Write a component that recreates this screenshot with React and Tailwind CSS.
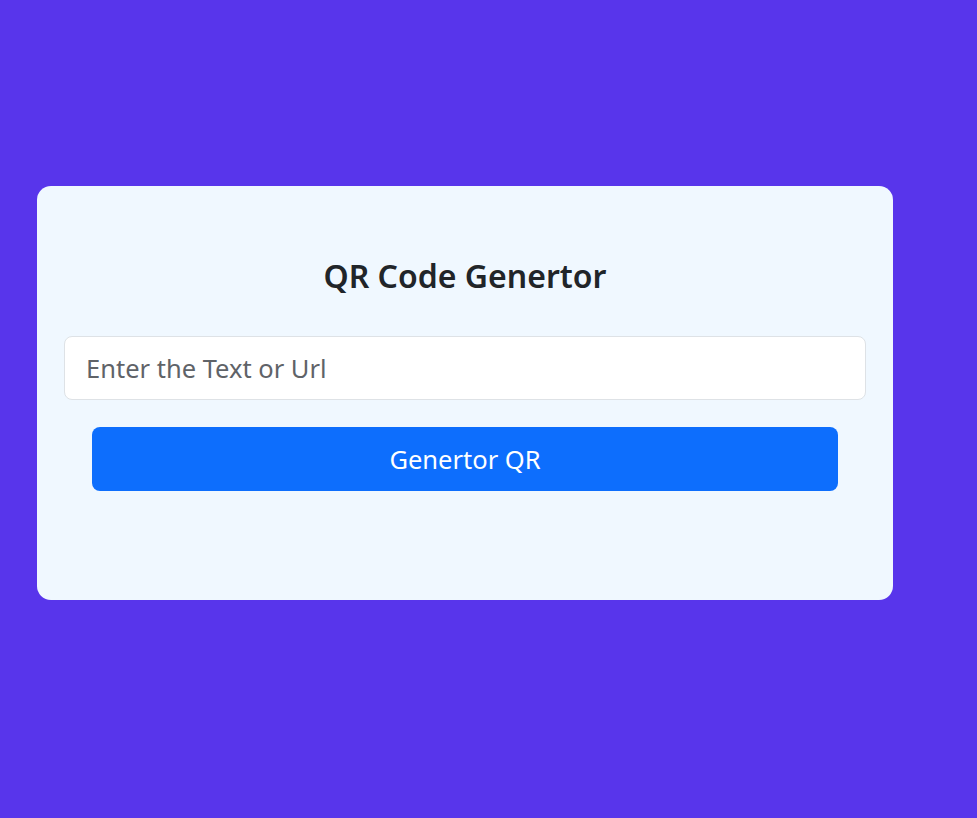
export default function App() {
  return (
    <div className="min-h-screen w-full bg-[#5835eb] pt-[186px] pl-[37px] font-['Noto_Sans','Open_Sans',sans-serif]">
      <div className="flex h-[414px] w-[856px] flex-col rounded-[14px] bg-[#f0f8ff] px-[27px] pt-[71px]">
        <h1 className="text-center text-[32px] leading-[38px] font-semibold text-[#212529]">QR Code Genertor</h1>
        <input
          type="text"
          placeholder="Enter the Text or Url"
          className="mt-[41px] h-[64px] w-full rounded-lg border border-[#dee2e6] bg-white px-[21px] text-[25.5px] text-[#212529] outline-none placeholder:text-[#5f6368]"
        />
        <button className="mx-[28px] mt-[27px] h-[64px] rounded-lg bg-[#0d6efd] text-[25.5px] text-white">
          Genertor QR
        </button>
      </div>
    </div>
  )
}
